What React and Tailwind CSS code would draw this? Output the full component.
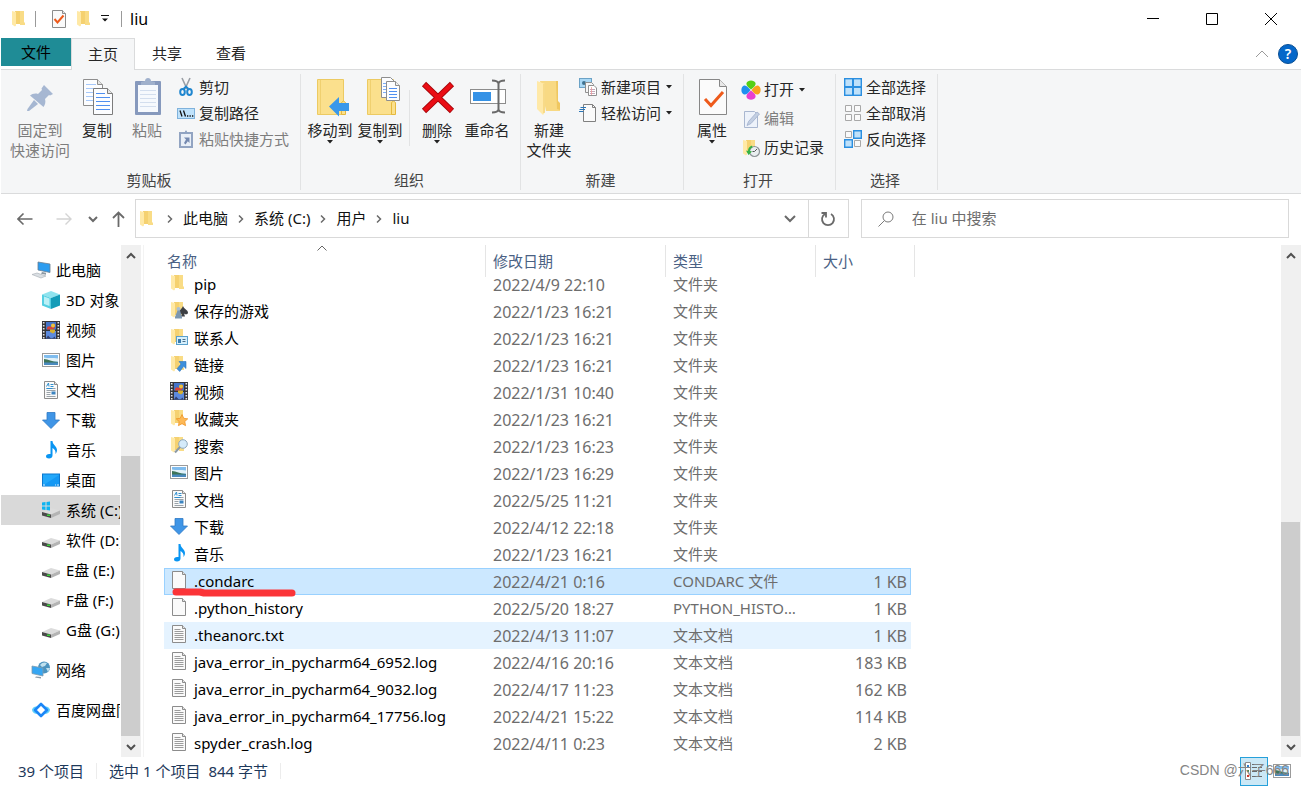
import React, { useState } from 'react';

const QUICK_LINKS = [
  { icon: 'pc', label: '此电脑', root: true },
  { icon: 'cube', label: '3D 对象' },
  { icon: 'video', label: '视频' },
  { icon: 'picture', label: '图片' },
  { icon: 'doc', label: '文档' },
  { icon: 'download', label: '下载' },
  { icon: 'music', label: '音乐' },
  { icon: 'desktop', label: '桌面' },
  { icon: 'windrive', label: '系统 (C:)', active: true },
  { icon: 'drive', label: '软件 (D:)' },
  { icon: 'drive', label: 'E盘 (E:)' },
  { icon: 'drive', label: 'F盘 (F:)' },
  { icon: 'drive', label: 'G盘 (G:)' },
  { icon: 'network', label: '网络', root: true, gap: true },
  { icon: 'cloud', label: '百度网盘同步空间', root: true, gap: true },
];

const FILES = [
  { icon: 'folder', name: 'pip', date: '2022/4/9 22:10', type: '文件夹' },
  { icon: 'games', name: '保存的游戏', date: '2022/1/23 16:21', type: '文件夹' },
  { icon: 'contacts', name: '联系人', date: '2022/1/23 16:21', type: '文件夹' },
  { icon: 'links', name: '链接', date: '2022/1/23 16:21', type: '文件夹' },
  { icon: 'video', name: '视频', date: '2022/1/31 10:40', type: '文件夹' },
  { icon: 'favorites', name: '收藏夹', date: '2022/1/23 16:21', type: '文件夹' },
  { icon: 'searches', name: '搜索', date: '2022/1/23 16:23', type: '文件夹' },
  { icon: 'picture', name: '图片', date: '2022/1/23 16:29', type: '文件夹' },
  { icon: 'doc', name: '文档', date: '2022/5/25 11:21', type: '文件夹' },
  { icon: 'download', name: '下载', date: '2022/4/12 22:18', type: '文件夹' },
  { icon: 'music', name: '音乐', date: '2022/1/23 16:21', type: '文件夹' },
  { icon: 'file', name: '.condarc', date: '2022/4/21 0:16', type: 'CONDARC 文件', size: '1 KB', marked: true },
  { icon: 'file', name: '.python_history', date: '2022/5/20 18:27', type: 'PYTHON_HISTORY 文件', size: '1 KB' },
  { icon: 'text', name: '.theanorc.txt', date: '2022/4/13 11:07', type: '文本文档', size: '1 KB', hot: true },
  { icon: 'text', name: 'java_error_in_pycharm64_6952.log', date: '2022/4/16 20:16', type: '文本文档', size: '183 KB' },
  { icon: 'text', name: 'java_error_in_pycharm64_9032.log', date: '2022/4/17 11:23', type: '文本文档', size: '162 KB' },
  { icon: 'text', name: 'java_error_in_pycharm64_17756.log', date: '2022/4/21 15:22', type: '文本文档', size: '114 KB' },
  { icon: 'text', name: 'spyder_crash.log', date: '2022/4/11 0:23', type: '文本文档', size: '2 KB' },
];

/* Small icons, all on an 18x18 grid */

function FolderShape() {
  return (
    <>
      <path d="M4 1h9v12l-3 1H4z" fill="#f5d170" />
      <path d="M12 1h1v11l1 1v2h-5V1z" fill="#f9dc86" />
      <path d="M1 1l4 1v13.500l-1 1-3-2z" fill="#ffe9a6" />
    </>
  );
}

function PageShape() {
  return (
    <>
      <path d="M2.500.5h10l3 3v14h-13z" fill="#fafafa" stroke="#8c8c8c" />
      <path d="M12.500.5v3h3" fill="#e4e4e4" stroke="#8c8c8c" />
    </>
  );
}

function DriveShape() {
  return (
    <>
      <path d="M0 11l9-4 9 2.500-9 4z" fill="#dcdcdc" />
      <path d="M0 11l9 2.500V17l-9-2.500z" fill="#4a4a4a" />
      <path d="M9 13.500l9-4V13l-9 4z" fill="#b4b4b4" />
      <rect x="5" y="13.500" width="3" height="1.500" fill="#3bd23b" />
    </>
  );
}

const GLYPHS = {
  folder: <FolderShape />,
  games: (
    <>
      <FolderShape />
      <path d="M13 5c1 3 5 4 5 6.500 0 2-2.500 2.500-4 1l1 3h-4l1-3c-1 1-3 .5-3-1C9 9 12 8 13 5z" fill="#3d3f44" />
      <circle cx="8.500" cy="8" r="2" fill="#a9bfd3" />
      <path d="M7.500 9.500h2.500l2 6.500v1.500H5V16z" fill="#7c97b0" />
    </>
  ),
  contacts: (
    <>
      <FolderShape />
      <rect x="6.500" y="8.500" width="11" height="8" fill="#d6effc" stroke="#5aa0cc" />
      <rect x="8" y="11" width="3" height="4" fill="#3b7bab" />
      <path d="M12.500 11.500h3M12.500 13.500h3" stroke="#4b6f8a" />
    </>
  ),
  links: (
    <>
      <FolderShape />
      <path d="M9 6.500h7v7l-2.300-2.200-4 5.200-2.700-2.700 4-4.800z" fill="#3d8fdc" stroke="#2b74bb" strokeWidth=".6" />
    </>
  ),
  favorites: (
    <>
      <FolderShape />
      <path d="M12 5.500l1.800 3.800 4 .5-3 2.700.8 4.200-3.600-2-3.600 2 .8-4.200-3-2.700 4-.5z" fill="#fdb956" stroke="#ec8e1c" strokeWidth=".7" />
    </>
  ),
  searches: (
    <>
      <FolderShape />
      <path d="M10 11l-5 5.500" stroke="#8c9aa5" strokeWidth="2" />
      <circle cx="13" cy="8" r="4.300" fill="#d5ebfa" stroke="#8fa9bd" />
    </>
  ),
  video: (
    <>
      <rect width="18" height="18" fill="#35353a" />
      <path d="M1.700 1v17M16.300 1v17" stroke="#e6e6e6" strokeWidth="1.600" strokeDasharray="1.600 1.400" />
      <rect x="4" y="1" width="10" height="7.500" fill="#4473c9" />
      <rect x="4" y="10" width="10" height="7.500" fill="#5c8ade" />
      <path d="M5 7.500c0-2.500 3-3 4-1.500l1-3h3v3l-2 2.500H5z" fill="#d8423a" />
      <circle cx="11" cy="4.500" r="2" fill="#e7c53f" />
      <path d="M8 8.500h5v2.500l-2 1.500-3-1.500z" fill="#d6b02e" />
      <path d="M4 17.500l2-3 3 3zM10 17.500l3-2v2z" fill="#31406f" />
    </>
  ),
  picture: (
    <>
      <rect x=".5" y="2.500" width="17" height="13" fill="#fff" stroke="#9b9b9b" />
      <rect x="2" y="4" width="14" height="10" fill="#7fbcee" />
      <path d="M2 6.500c4 1 9 0 14 1v3H2z" fill="#e1f1f8" />
      <path d="M2 8c4 .5 8 2.500 14 3v1H2z" fill="#3e7458" />
      <path d="M2 11.500h14V14H2z" fill="#4a8abf" />
    </>
  ),
  doc: (
    <>
      <PageShape />
      <path d="M4.500 5.500l2-3.500.5 3.500M8.500 3.500h3M8.500 5.500h3" stroke="#2d8fd0" fill="none" />
      <path d="M4.500 7.500h9M4.500 9.500h9M4.500 11.500h4M4.500 13.500h4M4.500 15.500h9" stroke="#9aa3aa" />
      <path d="M4.500 7.500h6" stroke="#2d8fd0" />
      <rect x="9.500" y="10.500" width="4" height="3" fill="#3c84c0" />
    </>
  ),
  download: <path d="M5 1.500h8V9h4.500L9 17.500.5 9H5z" fill="#3f95e6" stroke="#2d78c4" strokeWidth=".8" />,
  music: <path d="M8.500 0h2c0 4 4.500 5 4.500 9 0 2-1 3.500-1.500 4 .5-3-1-5-3-6v7.500c0 2-1.500 3-3.500 3-1.800 0-3-1-3-2.300 0-1.500 1.500-2.700 4.500-2.200z" fill="#0a95f2" />,
  desktop: (
    <>
      <rect x=".5" y="3" width="17" height="12" fill="#23a8fa" stroke="#0b78cf" />
      <path d="M1 14.500L17 4v10.500z" fill="#1498f4" />
      <path d="M1 14h16" stroke="#d6ecff" strokeDasharray="2 10 1 1" />
    </>
  ),
  pc: (
    <>
      <path d="M6 1l12 2v8.500L6 9z" fill="#2b9cf0" stroke="#6b7f90" strokeWidth=".8" />
      <path d="M10 11l4 .8v2l-5-1z" fill="#8b98a3" />
      <path d="M0 13.500l5-1.500 9 3-5 2z" fill="#dadfe3" stroke="#a4abb1" strokeWidth=".6" />
    </>
  ),
  cube: (
    <>
      <path d="M9 0l9 3.500L9 7 0 3.500z" fill="#8fe3ee" />
      <path d="M0 3.500L9 7v11l-9-3.500z" fill="#54cfe2" />
      <path d="M18 3.500L9 7v11l9-3.500z" fill="#139cb8" />
      <path d="M2 5.500l5.500 2v7.500L2 13z" fill="#baf0f6" />
    </>
  ),
  drive: <DriveShape />,
  windrive: (
    <>
      <DriveShape />
      <path d="M0 1.500l3.500-.5v3.500H0zM4.500 1L8 .5v4H4.500zM0 5.500h3.500V9L0 8.500zM4.500 5.500H8v4L4.500 9z" fill="#0cb4f2" />
    </>
  ),
  network: (
    <>
      <circle cx="12" cy="6.500" r="6" fill="#4b93bf" />
      <path d="M8 4c2-3 5-3 7-2l-2 3-3 1zM14 7l4 0-2 4z" fill="#bfe0ee" />
      <path d="M0 5l11 2v8L0 12.500z" fill="#35a6f3" stroke="#7f9aac" strokeWidth=".8" />
      <path d="M4 15.500l5 .5v1.500l-6-1z" fill="#8d9ba6" />
    </>
  ),
  cloud: (
    <>
      <path d="M0 8.500C1 6 3 5 5 5.500L8 9l-3.500 4C2 12.500 0 11 0 8.500zM18 8.500c-1-2.500-3-3.500-5-3L10 9l3.500 4c2.500-.5 4.500-2 4.500-4.500z" fill="#5fd0fb" />
      <path d="M9 3L15 9l-6 6-6-6z" fill="#fff" stroke="#1b86f7" strokeWidth="2.600" strokeLinejoin="round" />
    </>
  ),
  file: <PageShape />,
  text: (
    <>
      <PageShape />
      <path d="M4.500 4.500h6M4.500 6.500h9M4.500 8.500h9M4.500 10.500h9M4.500 12.500h9M4.500 14.500h9" stroke="#9c9c9c" />
    </>
  ),
  props: (
    <>
      <PageShape />
      <path d="M4.500 9l3 3.500 6-7" fill="none" stroke="#ee5a1b" strokeWidth="2" />
    </>
  ),
  scissors: (
    <>
      <path d="M5 0l5 11M13 0L8 11" stroke="#9a9fa5" strokeWidth="1.600" />
      <ellipse cx="5.500" cy="14" rx="2.300" ry="3" fill="none" stroke="#1f86cf" strokeWidth="2" />
      <ellipse cx="12.500" cy="14" rx="2.300" ry="3" fill="none" stroke="#1f86cf" strokeWidth="2" />
      <path d="M6.500 11L9 8.500l2.500 2.500" fill="none" stroke="#1f86cf" strokeWidth="1.800" />
    </>
  ),
  path: (
    <>
      <rect x=".5" y="4.500" width="17" height="10" fill="#bfe2fb" stroke="#7fb2dc" />
      <path d="M3 6.500l2 6M6.500 6.500l2 6" stroke="#111" strokeWidth="1.300" />
      <path d="M10 12h1.300M12.500 12h1.300M15 12h1.300" stroke="#111" strokeWidth="1.300" />
    </>
  ),
  shortcut: (
    <>
      <rect x="3" y="3" width="12" height="14" fill="#e9eff7" stroke="#92a4c2" strokeWidth="2" />
      <path d="M5.500 4V2.500L8 2c0-2 2-2 2 0l2.500.5V4z" fill="#8fa3c2" />
      <path d="M7 7.500h5.500V13l-1.700-1.700-2.300 3.200-1.500-1.500 2-3.500z" fill="#7489b0" />
    </>
  ),
  newitem: (
    <>
      <rect x=".5" y=".5" width="12" height="9" fill="#a9d8f5" stroke="#6ba2c6" />
      <circle cx="5" cy="5" r="2" fill="#3f7391" />
      <path d="M6.500 4.500h6l2 2v8h-8z" fill="#f6f6f6" stroke="#909090" />
      <path d="M9.500 7.500h5.500l2.500 2.500v7.500h-8z" fill="#fff" stroke="#909090" />
      <path d="M11 11.500h5M11 13.500h5M11 15.500h5" stroke="#c3a9b9" />
      <path d="M12.500 9v8" stroke="#ef9a9a" strokeWidth=".8" />
    </>
  ),
  easy: (
    <>
      <path d="M4.500.5h9l3 3v14h-12z" fill="#fafafa" stroke="#808080" />
      <path d="M13.500.5v3h3" fill="none" stroke="#808080" />
      <path d="M1.500 3.500H7M.5 5.500h5.500M0 7.500h4.500" stroke="#2a76b8" />
    </>
  ),
  edit: (
    <>
      <path d="M2.500 1.500h10l3 3v13h-13z" fill="#edf2fa" stroke="#a9b7d0" />
      <path d="M15 2l2.500 2L9 13.500l-4 2 1.500-4z" fill="#c3cfe2" stroke="#9fafcb" strokeWidth=".8" />
    </>
  ),
  history: (
    <>
      <FolderShape />
      <circle cx="12.500" cy="12.500" r="5" fill="#e9eef0" stroke="#8c9396" strokeWidth="1.200" />
      <path d="M12.500 12.500l2.500-2.500M12.500 12.500h-2" stroke="#555" />
      <path d="M10 6.500c-3 1-4 3-4 5.500l-2-.5 2.500 4.500L10 12.500l-2-.5c0-2 .5-3 2.500-3.500z" fill="#35b244" />
    </>
  ),
  flower: (
    <>
      <path d="M9 8.500C6.500 6.500 4 4.500 4.500 2 5.500-1.500 12.500-1.500 13.500 2c.5 2.500-2 4.500-4.500 6.500z" fill="#55cf14" />
      <path d="M9 9.500c-2.500 2-5 4-4.500 6.500 1 3.500 8 3.500 9 0 .5-2.500-2-4.500-4.500-6.500z" fill="#e83fd0" />
      <path d="M8.500 9C6.500 6.500 4.500 4 2 4.500-1.500 5.500-1.500 12.500 2 13.500c2.500.5 4.500-2 6.500-4.500z" fill="#1f8ff0" />
      <path d="M9.500 9c2-2.500 4-5 6.500-4.500 3.500 1 3.500 8 0 9-2.500.5-4.500-2-6.500-4.500z" fill="#f9a11c" />
    </>
  ),
  selectall: (
    <>
      <rect x=".7" y=".7" width="16.600" height="16.600" fill="#bfe1fa" stroke="#2b8fe0" strokeWidth="1.400" />
      <path d="M9 0v18M0 9h18" stroke="#2b8fe0" strokeWidth="2" />
    </>
  ),
  selectnone: <path d="M1.500 1.500h6v6h-6zM10.500 1.500h6v6h-6zM1.500 10.500h6v6h-6zM10.500 10.500h6v6h-6z" fill="#fafafa" stroke="#a8a8a8" />,
  invert: (
    <>
      <path d="M1.500 1.500h6v6h-6zM10.500 10.500h6v6h-6z" fill="#fafafa" stroke="#a8a8a8" />
      <path d="M9.700.7h7.600v7.600H9.700zM.7 9.700h7.600v7.600H.7z" fill="#bfe1fa" stroke="#2b8fe0" strokeWidth="1.400" />
    </>
  ),
};

function Glyph({ name, className = '' }) {
  return (
    <svg viewBox="0 0 18 18" className={`w-[18px] h-[18px] shrink-0 overflow-visible ${className}`} aria-hidden="true">
      {GLYPHS[name]}
    </svg>
  );
}

/* Large ribbon icons, on a 40x40 grid */

const BIG_GLYPHS = {
  pin: (
    <g fill="#a6b7d2">
      <path d="M24 7l9 9-3 1.500-1-.5-4 4c1 3 0 6-1.500 8L10 17.500c2-1.500 5-2.500 8-1.500l4-4-.5-1.500z" />
      <path d="M14 22l4 4-9 7-2 0 .500-2z" />
    </g>
  ),
  copy: (
    <g>
      <path d="M6.500 1.500h14l5 5v21h-19z" fill="#fcfdff" stroke="#8e8e8e" />
      <path d="M20.500 1.500v5h5" fill="#e6e6e6" stroke="#8e8e8e" />
      <path d="M9 6.500h10M9 10.500h14M9 14.500h8M9 18.500h8M9 22.500h8" stroke="#a6c8fa" />
      <path d="M16.500 10.500h14l5 5v21h-19z" fill="#fcfdff" stroke="#7c7c7c" />
      <path d="M30.500 10.500v5h5" fill="#e6e6e6" stroke="#7c7c7c" />
      <path d="M19 15.500h9M19 19.500h14M19 23.500h14M19 27.500h14M19 31.500h14" stroke="#4f8ff0" />
    </g>
  ),
  paste: (
    <g>
      <rect x="8" y="3" width="26" height="34" rx="1" fill="#8699bd" />
      <rect x="11" y="7" width="20" height="27" fill="#f6f9fd" />
      <path d="M13 12.500h16M13 16.500h16M13 20.500h16M13 24.500h16M13 28.500h16" stroke="#d3deee" />
      <path d="M14 7V4l4-1c0-4 6-4 6 0l4 1v3z" fill="#9fb0cc" />
    </g>
  ),
  moveto: (
    <g>
      <path d="M7.500 1.500h26v35h-26z" fill="#fbe08d" stroke="#ecca62" />
      <path d="M10.500 2v34" stroke="#f0d070" />
      <path d="M31.500 36.500v-12l2-1.500 2 1.500v12z" fill="#fbe08d" stroke="#e5b93e" />
      <path d="M29 19v6h10v8H29v5.500L19 28.500z" fill="#3a98ea" />
    </g>
  ),
  copyto: (
    <g>
      <path d="M7.500 1.500h26v35h-26z" fill="#fbe08d" stroke="#ecca62" />
      <path d="M10.500 2v34" stroke="#f0d070" />
      <path d="M31.500 36.500v-12l2-1.500 2 1.500v12z" fill="#fbe08d" stroke="#e5b93e" />
      <path d="M21.500-.5h9l5 5v15h-14z" fill="#fcfdff" stroke="#8e8e8e" />
      <path d="M23 5.500h4M23 8.500h4M23 11.500h4M23 14.500h4" stroke="#7eaef5" />
      <path d="M26.500 3.500h9l4 4v15h-13z" fill="#fcfdff" stroke="#8e8e8e" />
      <path d="M35.500 3.500v4h4" fill="#eee" stroke="#8e8e8e" />
      <path d="M29 10.500h8M29 13.500h8M29 16.500h8M29 19.500h8" stroke="#4f8ff0" />
    </g>
  ),
  remove: (
    <g>
      <path d="M7 6l28 27M35 6L7 33" stroke="#a4060b" strokeWidth="6" />
      <path d="M7.500 6.500l27 26M34.500 6.500l-27 26" stroke="#ea0d14" strokeWidth="4.500" />
    </g>
  ),
  rename: (
    <g>
      <rect x="3.500" y="11.500" width="35" height="14" fill="#fff" stroke="#8c8c8c" />
      <rect x="6" y="14" width="18" height="9" fill="#3592e6" />
      <path d="M25 2.500c4 0 6 1 6.500 3 .5-2 2.500-3 6.500-3M25 34.500c4 0 6-1 6.500-3 .5 2 2.500 3 6.500 3M31.500 4v29" fill="none" stroke="#6a6a6a" strokeWidth="2" />
    </g>
  ),
  newfolder: (
    <g>
      <path d="M11 3h18v22l2 2v6l-14 0z" fill="#f8d983" />
      <path d="M27 3h2v20l2 2v7l-3-1z" fill="#efc760" />
      <path d="M8 3l8 3v28l-2 3-6-6z" fill="#ffe9a8" />
      <path d="M15 6v29" stroke="#f0cb68" />
    </g>
  ),
  properties: (
    <g>
      <path d="M7.500 1.500h20l7 7v28h-27z" fill="#fbfbfb" stroke="#878787" />
      <path d="M27.500 1.500v7h7" fill="#e8e8e8" stroke="#878787" />
      <path d="M13 21l6 6.500L31 14" fill="none" stroke="#ee5a1b" strokeWidth="3" />
    </g>
  ),
};

function Caret() {
  return (
    <svg viewBox="0 0 8 4" className="w-2 h-1 shrink-0" aria-hidden="true">
      <path d="M1 0h6L4 3.500z" fill="#222" />
    </svg>
  );
}

function Chevron({ d, className = '' }) {
  return (
    <svg viewBox="0 0 10 10" className={`w-[10px] h-[10px] shrink-0 ${className}`} fill="none" stroke="currentColor" aria-hidden="true">
      <path d={d} />
    </svg>
  );
}

const UP = 'M1 7l4-4 4 4';
const DOWN = 'M1 3l4 4 4-4';
const RIGHT = 'M3 1.500l3.500 3.500-3.500 3.500';

function BigButton({ icon, lines, caret, disabled, wide }) {
  return (
    <button
      disabled={disabled}
      className={`flex flex-col items-center pt-0.5 shrink-0 ${wide ? 'w-16' : 'w-[50px]'} ${
        disabled ? 'text-[#7d7d7d]' : 'text-[#262626]'
      }`}
    >
      <svg viewBox="0 0 40 40" className="w-10 h-11 overflow-visible" aria-hidden="true">{BIG_GLYPHS[icon]}</svg>
      {lines.map((line) => (
        <span key={line} className="leading-5 whitespace-nowrap">{line}</span>
      ))}
      {caret && <Caret />}
    </button>
  );
}

function SmallButton({ icon, label, caret, disabled, tall }) {
  return (
    <button
      disabled={disabled}
      className={`flex items-center gap-1 whitespace-nowrap ${tall ? 'h-[29px]' : 'h-[26px]'} ${
        disabled ? 'text-[#7d7d7d]' : 'text-[#262626]'
      }`}
    >
      <Glyph name={icon} />
      <span>{label}</span>
      {caret && <Caret />}
    </button>
  );
}

function RibbonGroup({ title, width, children }) {
  return (
    <section className={`flex flex-col shrink-0 ${width}`}>
      <div className="flex flex-1">{children}</div>
      <h2 className="pr-[3px] text-center leading-5 text-[#444]">{title}</h2>
    </section>
  );
}

function ScrollBar({ thumb }) {
  return (
    <div className="flex flex-col w-5 shrink-0 bg-[#f0f0f0] text-[#505050]">
      <button aria-label="向上滚动" className="h-[21px] flex items-center justify-center">
        <Chevron d={UP} className="stroke-2" />
      </button>
      <div className="flex-1 flex flex-col justify-end pr-px">
        <div className={`bg-[#cdcdcd] ${thumb}`} />
      </div>
      <button aria-label="向下滚动" className="h-[21px] flex items-center justify-center">
        <Chevron d={DOWN} className="stroke-2" />
      </button>
    </div>
  );
}

function TitleBar() {
  return (
    <header className="flex items-center h-[38px] pr-px shrink-0">
      <div className="flex flex-1 items-center text-base">
        <Glyph name="folder" className="ml-2.5" />
        <span className="w-px h-4 ml-1.5 bg-[#9a9a9a]" />
        <Glyph name="props" className="ml-3.5" />
        <Glyph name="folder" className="ml-2" />
        <button aria-label="自定义快速访问工具栏" className="ml-[7px] w-2">
          <svg viewBox="0 0 8 8" className="w-2 h-2">
            <path d="M0 .5h8" stroke="#111" />
            <path d="M1 3.500h6L4 6.500z" fill="#111" />
          </svg>
        </button>
        <span className="w-px h-4 ml-3 bg-[#9a9a9a]" />
        <h1 className="ml-2">liu</h1>
      </div>
      <button aria-label="最小化" className="w-[59px] flex justify-center">
        <svg viewBox="0 0 12 12" className="w-3 h-3" stroke="#000"><path d="M0 5.500h12" /></svg>
      </button>
      <button aria-label="最大化" className="w-[59px] flex justify-center">
        <svg viewBox="0 0 12 12" className="w-3 h-3" stroke="#000" fill="none"><path d="M.5.5h11v11H.5z" /></svg>
      </button>
      <button aria-label="关闭" className="w-[59px] flex justify-center">
        <svg viewBox="0 0 12 12" className="w-3 h-3" stroke="#000"><path d="M0 0l12 12M12 0L0 12" /></svg>
      </button>
    </header>
  );
}

function TabStrip() {
  return (
    <nav className="flex h-8 shrink-0 border-b border-[#dadbdc] text-[#262626]">
      <button className="w-[70px] h-7 bg-[#1f8c96] text-black">文件</button>
      <button className="w-16 -mb-px border border-b-0 border-[#dadbdc] bg-[#f5f6f7]">主页</button>
      <button className="w-16">共享</button>
      <button className="w-16">查看</button>
      <div className="flex flex-1 items-center justify-end gap-2.5 pr-[3px]">
        <button aria-label="最小化功能区" className="text-[#9a9a9a]">
          <svg viewBox="0 0 12 8" className="w-3 h-2" fill="none" stroke="currentColor"><path d="M0 7l6-6 6 6" /></svg>
        </button>
        <button aria-label="帮助" className="w-5 h-5 rounded-full border border-[#0a4f94] bg-[#0567c9] text-white text-sm font-semibold leading-4">?</button>
      </div>
    </nav>
  );
}

function Ribbon() {
  return (
    <div className="flex shrink-0 h-[124px] pt-1 pb-[3px] border-b border-[#dadbdc] bg-[#f5f6f7] divide-x divide-[#e2e3e4]">
      <RibbonGroup title="剪贴板" width="w-[300px]">
        <div className="flex pl-[7px]">
          <BigButton icon="pin" lines={['固定到', '快速访问']} disabled wide />
          <BigButton icon="copy" lines={['复制']} />
          <BigButton icon="paste" lines={['粘贴']} disabled />
        </div>
        <div className="pl-[5px]">
          <SmallButton icon="scissors" label="剪切" />
          <SmallButton icon="path" label="复制路径" />
          <SmallButton icon="shortcut" label="粘贴快捷方式" disabled />
        </div>
      </RibbonGroup>
      <RibbonGroup title="组织" width="w-[220px]">
        <div className="flex pl-1">
          <BigButton icon="moveto" lines={['移动到']} caret />
          <BigButton icon="copyto" lines={['复制到']} caret />
          <span className="w-px h-14 ml-1 mr-0.5 mt-4 bg-[#e2e3e4]" />
          <BigButton icon="remove" lines={['删除']} caret />
          <BigButton icon="rename" lines={['重命名']} />
        </div>
      </RibbonGroup>
      <RibbonGroup title="新建" width="w-[163px]">
        <div className="flex pl-[3px]">
          <BigButton icon="newfolder" lines={['新建', '文件夹']} />
        </div>
        <div className="pl-[5px]">
          <SmallButton icon="newitem" label="新建项目" caret />
          <SmallButton icon="easy" label="轻松访问" caret />
        </div>
      </RibbonGroup>
      <RibbonGroup title="打开" width="w-[152px]">
        <div className="flex pl-[3px]">
          <BigButton icon="properties" lines={['属性']} caret />
        </div>
        <div className="pl-[5px] pt-px">
          <SmallButton icon="flower" label="打开" caret tall />
          <SmallButton icon="edit" label="编辑" disabled tall />
          <SmallButton icon="history" label="历史记录" tall />
        </div>
      </RibbonGroup>
      <RibbonGroup title="选择" width="w-[102px]">
        <div className="pl-2">
          <SmallButton icon="selectall" label="全部选择" />
          <SmallButton icon="selectnone" label="全部取消" />
          <SmallButton icon="invert" label="反向选择" />
        </div>
      </RibbonGroup>
      <div className="flex-1" />
    </div>
  );
}

function AddressRow() {
  const [query, setQuery] = useState('');
  const crumbs = ['此电脑', '系统 (C:)', '用户', 'liu'];

  return (
    <div className="flex shrink-0 h-[51px] pt-[5px] pb-[7px] pr-3 text-[#111]">
      <div className="flex items-center w-[134px] shrink-0 pl-4 text-[#6a6a6a]">
        <button aria-label="后退">
          <svg viewBox="0 0 16 16" className="w-4 h-4" fill="none" stroke="currentColor" strokeWidth="1.600"><path d="M15.500 8H1M6.500 2.500L1 8l5.500 5.500" /></svg>
        </button>
        <button aria-label="前进" disabled className="ml-[23px] text-[#d4d4d4]">
          <svg viewBox="0 0 16 16" className="w-4 h-4" fill="none" stroke="currentColor" strokeWidth="1.400"><path d="M.5 8H15M9.500 2.500L15 8l-5.500 5.500" /></svg>
        </button>
        <button aria-label="最近浏览的位置" className="ml-4">
          <Chevron d={DOWN} className="stroke-2" />
        </button>
        <button aria-label="上移" className="ml-3">
          <svg viewBox="0 0 16 16" className="w-4 h-4" fill="none" stroke="currentColor" strokeWidth="1.800"><path d="M8.500 16V1.500M3 7l5.500-5.500L14 7" /></svg>
        </button>
      </div>
      <div className="flex flex-[5] min-w-0">
        <div className="flex flex-1 border border-[#d9d9d9]">
          <div className="flex flex-1 items-center gap-2 pl-[3px]">
            <Glyph name="folder" />
            {crumbs.map((crumb) => (
              <React.Fragment key={crumb}>
                <Chevron d={RIGHT} className="stroke-[1.5] text-[#6a6a6a]" />
                <a href="#" className="whitespace-nowrap">{crumb}</a>
              </React.Fragment>
            ))}
          </div>
          <button aria-label="以前的位置" className="w-9 flex items-center justify-center text-[#6a6a6a]">
            <svg viewBox="0 0 12 8" className="w-3 h-2" fill="none" stroke="currentColor" strokeWidth="2"><path d="M1 1l5 5 5-5" /></svg>
          </button>
          <button aria-label="刷新" className="w-10 flex items-center justify-center border-l border-[#d9d9d9] text-[#6a6a6a]">
            <svg viewBox="0 0 16 16" className="w-4 h-4" fill="none" stroke="currentColor" strokeWidth="1.800">
              <path d="M11 3a6 6 0 1 1-6 0M1.500 2H6v4.500" />
            </svg>
          </button>
        </div>
      </div>
      <div className="flex flex-[3] min-w-0 ml-3">
        <label className="flex flex-1 min-w-0 items-center pl-4 border border-[#d9d9d9]">
          <svg viewBox="0 0 16 16" className="w-4 h-4 shrink-0" fill="none" stroke="#7a7a7a" aria-hidden="true">
            <circle cx="10" cy="6" r="5" />
            <path d="M6.500 9.500L.5 15.500" />
          </svg>
          <input
            type="search"
            aria-label="搜索"
            value={query}
            onChange={(e) => setQuery(e.target.value)}
            placeholder="在 liu 中搜索"
            className="flex-1 min-w-0 ml-[18px] bg-transparent outline-none placeholder:text-[#6d6d6d]"
          />
        </label>
      </div>
    </div>
  );
}

function SideBar() {
  return (
    <aside className="flex shrink-0 border-r border-[#f3f3f3] pr-0.5">
      <ul className="w-[119px] mr-px pt-2.5 overflow-hidden">
        {QUICK_LINKS.map((item) => (
          <li key={item.label} className={item.gap ? 'pt-2.5' : ''}>
            <a
              href="#"
              className={`flex items-center gap-1.5 h-[30px] whitespace-nowrap ${item.root ? 'pl-[31px]' : 'pl-[41px]'} ${
                item.active ? 'bg-[#d9d9d9]' : ''
              }`}
            >
              <Glyph name={item.icon} />
              {item.label}
            </a>
          </li>
        ))}
      </ul>
      <ScrollBar thumb="h-[280px]" />
    </aside>
  );
}

function HeaderCell({ label, width, sorted, last }) {
  return (
    <th className={`relative ${width} h-[26px] p-0 font-normal text-left align-bottom text-[#4a6184]`}>
      <button className={`block leading-5 ${sorted ? 'pl-[3px]' : 'pl-[7px]'}`}>{label}</button>
      {sorted && (
        <svg viewBox="0 0 10 6" className="absolute top-0 left-1/2 -translate-x-2 w-[10px] h-1.5" fill="none" stroke="#666">
          <path d="M.5 5.500L5 1l4.500 4.500" />
        </svg>
      )}
      <span className={`absolute top-0 w-px h-8 bg-[#e5e5e5] ${last ? '-right-1' : 'right-0'}`} />
    </th>
  );
}

function FileTable() {
  const [selected, setSelected] = useState('.condarc');

  function rowStyle(file) {
    if (file.name === selected) return 'bg-[#cce8ff] outline outline-1 -outline-offset-1 outline-[#99d1ff]';
    if (file.hot) return 'bg-[#e5f3ff]';
    return '';
  }

  return (
    <div className="flex-1 min-w-0 pl-5 overflow-hidden">
      <table className="table-fixed w-[747px] border-separate border-spacing-0">
        <thead>
          <tr>
            <HeaderCell label="名称" width="w-[322px]" sorted />
            <HeaderCell label="修改日期" width="w-[180px]" />
            <HeaderCell label="类型" width="w-[150px]" />
            <HeaderCell label="大小" width="w-[95px]" last />
          </tr>
        </thead>
        <tbody>
          {FILES.map((file) => (
            <tr key={file.name} onClick={() => setSelected(file.name)} className={`h-[27px] text-[#6d6d6d] ${rowStyle(file)}`}>
              <td className="relative p-0">
                <div className="flex items-center gap-1.5 pl-1.5 text-black whitespace-nowrap">
                  <Glyph name={file.icon} className="mb-1" />
                  {file.name}
                </div>
                {file.marked && (
                  <svg viewBox="0 0 124 9" className="absolute left-2 top-5 w-[124px] h-[9px]" aria-hidden="true">
                    <path d="M4 4l24 0 4 1h88" fill="none" stroke="#fb3438" strokeWidth="7" strokeLinecap="round" strokeLinejoin="round" />
                  </svg>
                )}
              </td>
              <td className="p-0 pl-[7px] text-base leading-5">{file.date}</td>
              <td className="p-0 pl-[7px] pr-4 truncate">{file.type}</td>
              <td className="p-0 pr-1 text-right text-base leading-5">{file.size}</td>
            </tr>
          ))}
        </tbody>
      </table>
    </div>
  );
}

function StatusBar() {
  return (
    <footer className="relative flex items-center shrink-0 h-[30px] pb-0.5 pl-[17px] text-[#1e395b]">
      <span className="pr-3 border-r border-[#ececec] leading-4">39 个项目</span>
      <span className="pl-3">选中 1 个项目</span>
      <span className="pl-2 pr-3 border-r border-[#ececec] leading-4">844 字节</span>
      <div className="flex flex-1 items-center justify-end gap-[5px] pr-2.5">
        <button aria-label="详细信息" className="w-7 h-[29px] flex items-center justify-center border border-[#26a0da] bg-[#cbe8f6]">
          <svg viewBox="0 0 18 18" className="w-[18px] h-[18px]" fill="none">
            <path d="M.5.5h5v17h-5z" fill="#fff" stroke="#8a8a8a" />
            <path d="M2 4h2" stroke="#2b7fd0" strokeWidth="2" />
            <path d="M2 9h2" stroke="#3f8f4a" strokeWidth="2" />
            <path d="M2 14h2" stroke="#d0342b" strokeWidth="2" />
            <path d="M7 2.500h5M13 2.500h4M7 5.500h5M13 5.500h4M7 9.500h5M13 9.500h4M7 14.500h5M13 14.500h4" stroke="#6a6a6a" />
          </svg>
        </button>
        <button aria-label="大缩略图"><Glyph name="picture" className="block" /></button>
      </div>
      <span className="absolute right-3 top-px text-sm leading-6 text-[#858585] font-['Liberation_Sans','Noto_Sans_CJK_SC',sans-serif] pointer-events-none">
        CSDN @六子666
      </span>
    </footer>
  );
}

export default function App() {
  return (
    <div className="h-screen flex flex-col px-px bg-white text-black text-[15px] font-['Noto_Sans','Noto_Sans_CJK_SC',sans-serif] overflow-hidden">
      <TitleBar />
      <TabStrip />
      <Ribbon />
      <AddressRow />
      <main className="flex flex-1 min-h-0">
        <SideBar />
        <FileTable />
        <ScrollBar thumb="h-[214px]" />
      </main>
      <StatusBar />
    </div>
  );
}
